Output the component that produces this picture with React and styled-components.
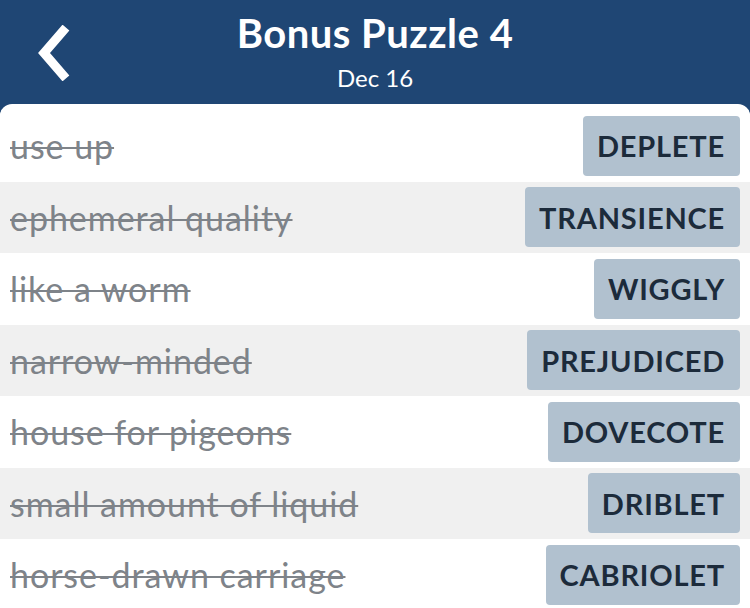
import React from 'react';
import styled, { createGlobalStyle } from 'styled-components';

const GlobalStyle = createGlobalStyle`
    html, body {
        margin: 0;
        padding: 0;
        background: #1f4674;
        overflow: hidden;
    }
    body {
        font-family: Lato, "Open Sans", sans-serif;
    }
`;

const Screen = styled.div`
    width: 750px;
    height: 608px;
    display: flex;
    flex-direction: column;
    background: #1f4674;
`;

const Header = styled.header`
    height: 104px;
    flex-shrink: 0;
    position: relative;
    display: flex;
    flex-direction: column;
    align-items: center;
    color: #ffffff;
`;

const Title = styled.h1`
    margin: 10px 0 0;
    font-size: 40px;
    font-weight: 700;
    line-height: 46px;
    letter-spacing: 0.5px;
`;

const SubTitle = styled.div`
    font-size: 24px;
    line-height: 28px;
    margin-top: 8px;
`;

const BackButton = styled.button`
    position: absolute;
    left: 30px;
    top: 22px;
    width: 46px;
    height: 62px;
    padding: 0;
    border: none;
    background: none;
    display: flex;
    align-items: center;
    justify-content: center;
`;

const Panel = styled.main`
    flex: 1;
    background: #ffffff;
    border-radius: 12px 12px 0 0;
    padding-top: 6px;
    overflow: hidden;
`;

const Row = styled.div`
    height: 71.5px;
    display: flex;
    align-items: center;
    justify-content: space-between;
    padding: 0 10px;
    background: ${p => (p.$shaded ? '#f0f0f0' : '#ffffff')};
`;

const Clue = styled.span`
    font-size: 34px;
    letter-spacing: 0.95px;
    color: #7e8389;
    text-decoration: line-through;
    text-decoration-thickness: 2px;
`;

const Answer = styled.span`
    height: 60px;
    padding: 0 15px 0 14px;
    display: flex;
    align-items: center;
    background: #b1c1cf;
    border-radius: 4px;
    color: #1c2b3b;
    font-size: 29px;
    font-weight: 700;
    letter-spacing: 0.8px;
`;

const words = [
    ['use up', 'DEPLETE'],
    ['ephemeral quality', 'TRANSIENCE'],
    ['like a worm', 'WIGGLY'],
    ['narrow-minded', 'PREJUDICED'],
    ['house for pigeons', 'DOVECOTE'],
    ['small amount of liquid', 'DRIBLET'],
    ['horse-drawn carriage', 'CABRIOLET'],
];

export default function App() {
    return (
        <Screen>
            <GlobalStyle />
            <Header>
                <BackButton aria-label="Back">
                    <svg width="40" height="56" viewBox="0 0 40 56">
                        <polyline points="30,6 11,28 30,50" fill="none" stroke="#fff" strokeWidth="9" strokeLinecap="square" />
                    </svg>
                </BackButton>
                <Title>Bonus Puzzle 4</Title>
                <SubTitle>Dec 16</SubTitle>
            </Header>
            <Panel>
                {words.map(([clue, answer], i) => (
                    <Row key={answer} $shaded={i % 2 === 1}>
                        <Clue>{clue}</Clue>
                        <Answer>{answer}</Answer>
                    </Row>
                ))}
            </Panel>
        </Screen>
    );
}
